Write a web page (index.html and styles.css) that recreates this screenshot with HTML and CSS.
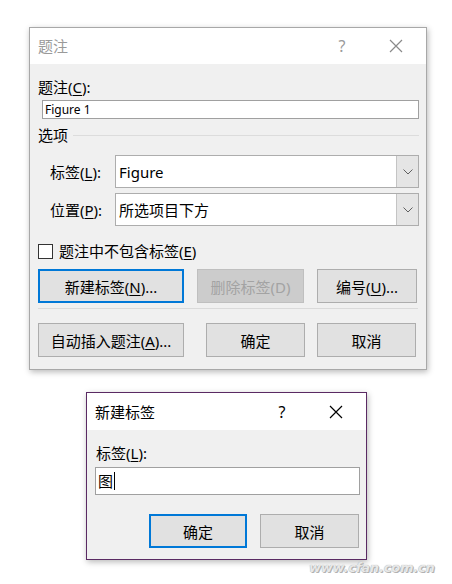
FILE: index.html
```html
<!DOCTYPE html>
<html lang="zh">
<head>
<meta charset="utf-8">
<link rel="stylesheet" href="styles.css">
</head>
<body>
<div class="page">
  <div class="dialog main">
    <div class="titlebar">
      <span class="title inactive">题注</span>
      <span class="help inactive">?</span>
      <span class="close">
        <svg width="14" height="14" viewBox="0 0 14 14"><path d="M1 1 L13 13 M13 1 L1 13" stroke="#8a8a8a" stroke-width="1.2" fill="none"/></svg>
      </span>
    </div>
    <div class="content">
      <div class="label first">题注(<u>C</u>):</div>
      <div class="textbox small">Figure 1</div>
      <div class="group">
        <span>选项</span>
        <span class="groupline"></span>
      </div>
      <div class="combo-row first-combo">
        <span class="combo-label">标签(<u>L</u>):</span>
        <div class="combo">
          <span class="combo-text">Figure</span>
          <span class="drop"><svg width="10" height="6" viewBox="0 0 10 6"><path d="M0.5 0.5 L5 5 L9.5 0.5" stroke="#606060" stroke-width="1" fill="none"/></svg></span>
        </div>
      </div>
      <div class="combo-row second-combo">
        <span class="combo-label">位置(<u>P</u>):</span>
        <div class="combo">
          <span class="combo-text">所选项目下方</span>
          <span class="drop"><svg width="10" height="6" viewBox="0 0 10 6"><path d="M0.5 0.5 L5 5 L9.5 0.5" stroke="#606060" stroke-width="1" fill="none"/></svg></span>
        </div>
      </div>
      <div class="check-row">
        <span class="checkbox"></span>
        <span>题注中不包含标签(<u>E</u>)</span>
      </div>
      <div class="btn-row row1">
        <button class="btn focused w146">新建标签(<u>N</u>)...</button>
        <button class="btn disabled w107">删除标签(D)</button>
        <button class="btn w100">编号(<u>U</u>)...</button>
      </div>
      <div class="sep"></div>
      <div class="btn-row row2">
        <button class="btn w146">自动插入题注(<u>A</u>)...</button>
        <button class="btn w99 gap22">确定</button>
        <button class="btn w99">取消</button>
      </div>
    </div>
  </div>

  <div class="dialog sub">
    <div class="titlebar">
      <span class="title">新建标签</span>
      <span class="help">?</span>
      <span class="close">
        <svg width="14" height="14" viewBox="0 0 14 14"><path d="M1 1 L13 13 M13 1 L1 13" stroke="#000" stroke-width="1.2" fill="none"/></svg>
      </span>
    </div>
    <div class="content sub-content">
      <div class="label first">标签(<u>L</u>):</div>
      <div class="textbox big">图<span class="caret"></span></div>
      <div class="btn-row sub-buttons">
        <button class="btn focused w98">确定</button>
        <button class="btn w99">取消</button>
      </div>
    </div>
  </div>
  <div class="watermark">www.cfan.com.cn</div>
</div>
</body>
</html>
```

FILE: styles.css
```css
* { box-sizing: border-box; }
html, body {
  margin: 0;
  padding: 0;
  background: #ffffff;
}
body {
  font-family: "Noto Sans", "Noto Sans CJK SC", sans-serif;
  font-size: 15px;
  line-height: 20px;
  color: #000;
}
.page {
  position: relative;
  width: 452px;
  height: 584px;
  padding-top: 27px;
  display: flex;
  flex-direction: column;
}
.dialog {
  border: 1px solid #a8a8a8;
  background: #f0f0f0;
  box-shadow: 1px 2px 6px rgba(0,0,0,0.28);
}
.main {
  margin-left: 29px;
  width: 398px;
  height: 343px;
}
.sub {
  margin-left: 86px;
  margin-top: 22px;
  width: 281px;
  height: 168px;
  border-color: #5a2a63;
}
.titlebar {
  background: #fff;
  height: 36px;
  display: flex;
  align-items: center;
  padding-left: 8px;
}
.sub .titlebar { height: 37px; }
.title { flex: 1; font-size: 15px; }
.inactive { color: #9a9a9a; }
.help {
  width: 20px;
  text-align: center;
  font-size: 16px;
  margin-right: 37px;
}
.close {
  width: 14px;
  height: 14px;
  margin-right: 23px;
  display: flex;
}
.close svg { display: block; }
.content {
  padding: 13px 7px 10px 8px;
  display: flex;
  flex-direction: column;
}
.label { height: 20px; }
u { text-decoration: underline; text-underline-offset: 2px; text-decoration-thickness: 1px; }
.textbox {
  background: #fff;
  border: 1px solid #a0a0a0;
}
.textbox.small {
  margin: 3px 0 0 4px;
  height: 19px;
  font-size: 12px;
  line-height: 17px;
  padding-left: 2px;
}
.group {
  margin-top: 6px;
  height: 20px;
  display: flex;
  align-items: center;
}
.groupline {
  flex: 1;
  height: 1px;
  background: #dcdcdc;
  margin-left: 5px;
}
.combo-row {
  display: flex;
  align-items: center;
  height: 33px;
}
.first-combo { margin-top: 10px; }
.second-combo { margin-top: 5px; }
.combo-label {
  width: 77px;
  padding-left: 12px;
}
.combo {
  flex: 1;
  height: 33px;
  background: #fff;
  border: 1px solid #adadad;
  display: flex;
  align-items: center;
}
.combo-text {
  flex: 1;
  padding-left: 3px;
  font-size: 15px;
}
.drop {
  width: 22px;
  height: 100%;
  background: #e5e5e5;
  border-left: 1px solid #c4c4c4;
  display: flex;
  align-items: center;
  justify-content: center;
}
.drop svg { display: block; }
.check-row {
  margin-top: 15px;
  height: 20px;
  display: flex;
  align-items: center;
}
.checkbox {
  width: 15px;
  height: 15px;
  border: 1px solid #333;
  background: #fff;
  margin-right: 6px;
}
.btn-row {
  display: flex;
}
.row1 { margin-top: 8px; }
.row1 .btn + .btn { margin-left: 13px; }
.row2 { margin-top: 14px; }
.row2 .btn + .btn { margin-left: 12px; }
.row2 .btn.gap22 { margin-left: 22px; }
.btn {
  height: 34px;
  padding: 0;
  border: 1px solid #adadad;
  background: #e1e1e1;
  font-family: inherit;
  font-size: 15px;
  color: #000;
}
.btn.focused {
  border: 2px solid #0078d7;
}
.btn.disabled {
  background: #cccccc;
  border-color: #bfbfbf;
  color: #a3a3a3;
}
.w146 { width: 146px; }
.w107 { width: 107px; }
.w100 { width: 100px; }
.w99 { width: 99px; }
.w98 { width: 98px; }
.sep {
  margin-top: 5px;
  height: 1px;
  background: #dadada;
  margin-right: 1px;
}
.sub-content {
  padding: 13px 6px 10px 8px;
}
.sub .label { padding-left: 1px; }
.textbox.big {
  margin-top: 4px;
  height: 28px;
  font-size: 15px;
  line-height: 26px;
  padding-left: 2px;
  display: flex;
  align-items: center;
}
.caret {
  width: 1px;
  height: 18px;
  background: #000;
  margin-left: 1px;
}
.sub-buttons {
  margin-top: 19px;
  justify-content: flex-end;
  padding-right: 1px;
}
.sub-buttons .btn + .btn { margin-left: 13px; }
.watermark {
  position: absolute;
  left: 309px;
  top: 558px;
  font-family: "DejaVu Sans", sans-serif;
  font-style: italic;
  font-weight: bold;
  font-size: 13px;
  letter-spacing: -0.2px;
  color: #e8e8e8;
  text-shadow: 0 0 1px #9a9a9a, 1px 1px 0 #b5b5b5;
}
```
